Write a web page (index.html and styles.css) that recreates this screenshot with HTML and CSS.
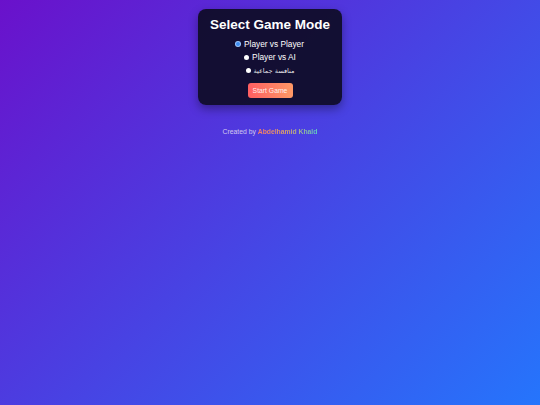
FILE: index.html
```html
<!DOCTYPE html>
<html lang="en">
<head>
    <meta charset="UTF-8">
    <meta name="viewport" content="width=device-width, initial-scale=1.0">
    <title>Select Game Mode</title>
    <link rel="stylesheet" href="styles.css">
</head>
<body>
    <div class="mode-container">
        <h2>Select Game Mode</h2>
        <label class="mode-option">
            <input type="radio" name="mode" value="pvp" checked>
            <span>Player vs Player</span>
        </label>
        <label class="mode-option">
            <input type="radio" name="mode" value="ai">
            <span>Player vs AI</span>
        </label>
        <label class="mode-option">
            <input type="radio" name="mode" value="group">
            <span class="arabic">منافسة جماعية</span>
        </label>
        <button id="start-btn">Start Game</button>
    </div>
    <div class="credits">
        Created by <span class="author">Abdelhamid Khald</span>
    </div>
</body>
</html>
```

FILE: styles.css
```css
html {
    min-height: 100%;
    background: linear-gradient(135deg, #6a11cb 0%, #2575fc 100%);
}

body {
    font-family: 'Liberation Sans', Arial, sans-serif;
    margin: 0;
    padding-top: 9px;
    min-height: 396px;
    display: flex;
    flex-direction: column;
    align-items: center;
}

.mode-container {
    width: 144px;
    box-sizing: border-box;
    background: rgba(14, 12, 38, 0.93);
    border-radius: 8px;
    box-shadow: 0 4px 10px rgba(0, 0, 0, 0.35);
    padding: 8px 8px 7px;
    display: flex;
    flex-direction: column;
    align-items: center;
    color: white;
}

.mode-container h2 {
    margin: 0 0 4px;
    font-size: 13.5px;
    line-height: 16px;
    font-weight: bold;
}

.mode-option {
    display: flex;
    align-items: center;
    height: 13.5px;
    font-size: 8.3px;
    cursor: pointer;
}

.mode-option input {
    appearance: none;
    -webkit-appearance: none;
    width: 5px;
    height: 5px;
    margin: 0 3px 0 0;
    border-radius: 50%;
    background: white;
}

.mode-option input:checked {
    background: #3d8cf0;
    box-shadow: 0 0 0 1px #9cc6ff;
    width: 4px;
    height: 4px;
    margin-right: 4px;
}

.mode-option .arabic {
    font-family: 'DejaVu Sans', sans-serif;
    font-size: 6.5px;
    color: rgba(255, 255, 255, 0.92);
}

#start-btn {
    margin-top: 5px;
    width: 45px;
    height: 15px;
    padding: 0;
    border: none;
    border-radius: 3px;
    background: linear-gradient(90deg, #ff5e62 0%, #ff9966 100%);
    color: rgba(255, 255, 255, 0.9);
    font-family: 'Liberation Sans', Arial, sans-serif;
    font-size: 6.8px;
    cursor: pointer;
}

.credits {
    margin-top: 23px;
    font-size: 6.8px;
    color: #d0c8ee;
}

.credits .author {
    font-weight: bold;
    background: linear-gradient(90deg, #ff7e5f 0%, #d6a56a 50%, #5fd0c0 100%);
    -webkit-background-clip: text;
    background-clip: text;
    color: transparent;
}
```
